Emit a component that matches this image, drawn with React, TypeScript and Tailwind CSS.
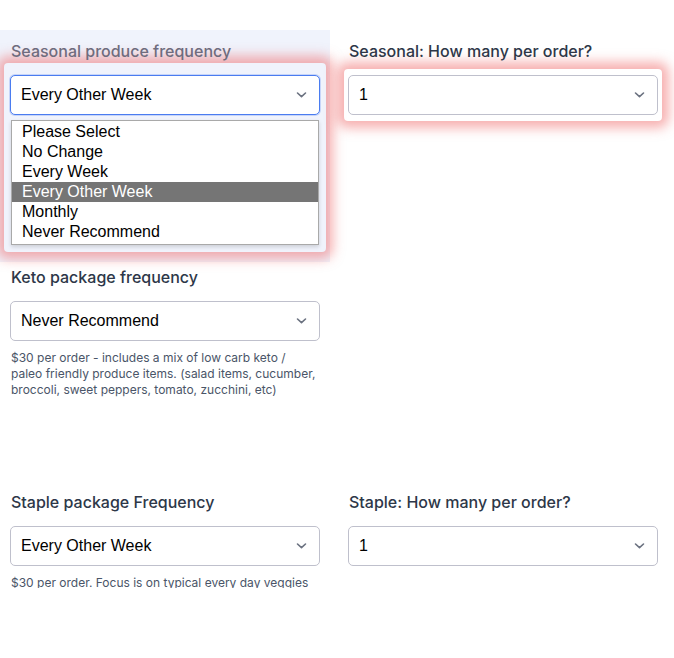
import React from 'react';

const options = ['Please Select', 'No Change', 'Every Week', 'Every Other Week', 'Monthly', 'Never Recommend'];

function Chevron() {
  return (
    <svg
      className="absolute right-[12px] top-1/2 -translate-y-1/2"
      width="11"
      height="7"
      viewBox="0 0 11 7"
      fill="none"
    >
      <path d="M1.5 1.5L5.5 5.2L9.5 1.5" stroke="#6b7280" strokeWidth="1.6" strokeLinecap="round" strokeLinejoin="round" />
    </svg>
  );
}

function Select({ value, focused }: { value: string; focused?: boolean }) {
  return (
    <div
      className={
        focused
          ? 'relative flex h-[40px] w-[310px] items-center rounded-[5px] border border-[#4a7cf0] bg-white pl-[10px] shadow-[0_0_0_1px_rgba(74,124,240,0.25)]'
          : 'relative flex h-[40px] w-[310px] items-center rounded-[5px] border border-[#bfc0cc] bg-white pl-[10px]'
      }
    >
      <span className="font-['Liberation_Sans',Arial,sans-serif] text-[16px] text-black">{value}</span>
      <Chevron />
    </div>
  );
}

function Label({ children, faded }: { children: React.ReactNode; faded?: boolean }) {
  return (
    <div
      className={
        faded
          ? 'h-[20px] text-[16px] leading-[20px] font-medium text-[#6e6c7e]'
          : 'h-[20px] text-[16px] leading-[20px] font-medium text-[#2d3748]'
      }
    >
      {children}
    </div>
  );
}

export default function App() {
  return (
    <div className="h-[658px] w-[674px] overflow-hidden bg-white font-['Inter',sans-serif]">
      {/* Seasonal row */}
      <div className="flex items-start">
        <div className="mt-[30px] w-[330px] bg-[#f0f3fc] pt-[11px] pb-[10px]">
          <div className="pl-[11px]">
            <Label faded>Seasonal produce frequency</Label>
          </div>
          <div className="mx-[4px] mt-[2px] rounded-[4px] pt-[12px] pb-[7px] shadow-[0_0_12px_7px_rgba(240,100,100,0.5)]">
            <div className="ml-[6px]">
              <Select value="Every Other Week" focused />
            </div>
            <div className="ml-[7px] mt-[5px] w-[308px] border border-[#a9a9a9] bg-white pt-[1px] pb-[2px] font-['Liberation_Sans',Arial,sans-serif] text-[16px] leading-[20px] text-black shadow-[0_2px_4px_rgba(0,0,0,0.15)]">
              {options.map((o) => (
                <div
                  key={o}
                  className={o === 'Every Other Week' ? 'h-[20px] bg-[#757575] pl-[10px] leading-[19px] text-white' : 'h-[20px] pl-[10px] leading-[19px]'}
                >
                  {o}
                </div>
              ))}
            </div>
          </div>
        </div>
        <div className="ml-[14px] w-[318px] pt-[41px]">
          <div className="pl-[5px]">
            <Label>Seasonal: How many per order?</Label>
          </div>
          <div className="mt-[8px] rounded-[4px] px-[4px] py-[6px] shadow-[0_0_12px_7px_rgba(240,100,100,0.5)]">
            <Select value="1" />
          </div>
        </div>
      </div>

      {/* Keto row */}
      <div className="ml-[10px] mt-[5px] w-[310px]">
        <div className="pl-[1px]">
          <Label>Keto package frequency</Label>
        </div>
        <div className="mt-[14px]">
          <Select value="Never Recommend" />
        </div>
        <p className="mt-[9px] pl-[1px] whitespace-nowrap text-[12px] leading-[16px] text-[#4a5568]">
          $30 per order - includes a mix of low carb keto /<br />
          paleo friendly produce items. (salad items, cucumber,<br />
          broccoli, sweet peppers, tomato, zucchini, etc)
        </p>
      </div>

      {/* Staple row */}
      <div className="ml-[10px] mt-[94px] flex items-start gap-[28px]">
        <div className="w-[310px]">
          <div className="pl-[1px]">
            <Label>Staple package Frequency</Label>
          </div>
          <div className="mt-[14px]">
            <Select value="Every Other Week" />
          </div>
          <div className="mt-[10px] h-[12px] overflow-hidden">
            <p className="pl-[1px] text-[12px] leading-[16px] text-[#4a5568] -mt-[1px]">
              $30 per order. Focus is on typical every day veggies
            </p>
          </div>
        </div>
        <div className="w-[310px]">
          <div className="pl-[1px]">
            <Label>Staple: How many per order?</Label>
          </div>
          <div className="mt-[14px]">
            <Select value="1" />
          </div>
        </div>
      </div>
    </div>
  );
}
